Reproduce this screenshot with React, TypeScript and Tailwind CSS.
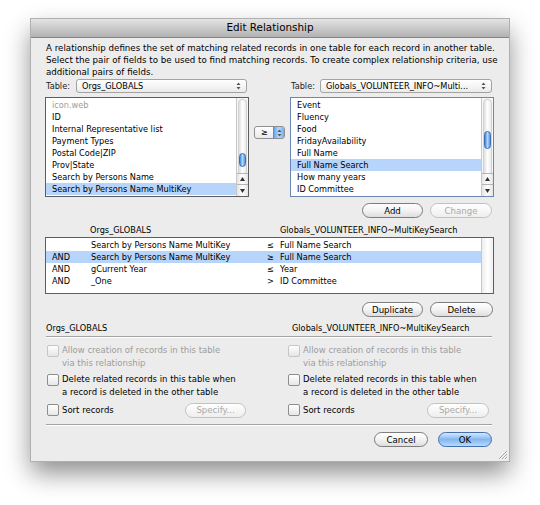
import React from "react";

const leftFields = [
  { name: "icon.web", dim: true },
  { name: "ID" },
  { name: "Internal Representative list" },
  { name: "Payment Types" },
  { name: "Postal Code|ZIP" },
  { name: "Prov|State" },
  { name: "Search by Persons Name" },
  { name: "Search by Persons Name MultiKey", selected: true },
];

const rightFields = [
  { name: "Event" },
  { name: "Fluency" },
  { name: "Food" },
  { name: "FridayAvailability" },
  { name: "Full Name" },
  { name: "Full Name Search", selected: true },
  { name: "How many years" },
  { name: "ID Committee" },
];

const criteria = [
  { join: "", left: "Search by Persons Name MultiKey", op: "≤", right: "Full Name Search" },
  { join: "AND", left: "Search by Persons Name MultiKey", op: "≥", right: "Full Name Search", selected: true },
  { join: "AND", left: "gCurrent Year", op: "≤", right: "Year" },
  { join: "AND", left: "_One", op: ">", right: "ID Committee" },
];

function UpDown() {
  return (
    <svg width="5" height="8" viewBox="0 0 5 8" className="shrink-0">
      <path d="M2.5 0.5 L4.5 3 L0.5 3 Z" fill="#555" />
      <path d="M0.5 5 L4.5 5 L2.5 7.5 Z" fill="#555" />
    </svg>
  );
}

function Popup({ label }: { label: string }) {
  return (
    <div className="flex h-[14px] flex-1 items-center rounded-[3px] border border-[#a3a3a3] bg-gradient-to-b from-white to-[#ebebeb] pl-[5px] pr-[5px]">
      <span className="flex-1 truncate leading-[12px]">{label}</span>
      <UpDown />
    </div>
  );
}

function Button({
  label,
  width,
  disabled,
  primary,
}: {
  label: string;
  width: string;
  disabled?: boolean;
  primary?: boolean;
}) {
  const look = primary
    ? "border-[#4470b0] bg-gradient-to-b from-[#d4e8fd] via-[#84b7f0] to-[#b6dafd] text-black"
    : disabled
      ? "border-[#c2c2c2] bg-gradient-to-b from-white to-[#eeeeee] text-[#a9a9a9]"
      : "border-[#7d7d7d] bg-gradient-to-b from-white via-[#f3f3f3] to-[#dedede] text-black";
  return (
    <div
      className={`flex h-[15px] items-center justify-center rounded-full border text-[8.6px] leading-[12px] ${width} ${look}`}
    >
      {label}
    </div>
  );
}

function Checkbox({ disabled }: { disabled?: boolean }) {
  return (
    <div
      className={`mt-[1px] h-[12px] w-[12px] shrink-0 rounded-[2px] border bg-gradient-to-b from-white to-[#e6e6e6] ${
        disabled ? "border-[#c6c6c6]" : "border-[#8d8d8d]"
      }`}
    />
  );
}

function ScrollBar({ thumb }: { thumb: string }) {
  return (
    <div className="flex w-[12px] shrink-0 flex-col border-l border-[#c9c9c9] bg-[#f6f6f6]">
      <div className="mx-[1px] mt-[1px] flex flex-1 flex-col rounded-t-full border border-b-0 border-[#d2d2d2] bg-gradient-to-r from-[#dedede] via-white to-[#eaeaea]">
        <div
          className={`rounded-full border border-[#3d6eb3] bg-gradient-to-r from-[#3f86dc] via-[#b3d6fc] to-[#5597e4] ${thumb}`}
        />
      </div>
      <div className="flex h-[11px] items-center justify-center border-t border-[#b5b5b5] bg-gradient-to-r from-[#e4e4e4] via-white to-[#e4e4e4]">
        <svg width="5" height="4" viewBox="0 0 5 4">
          <path d="M2.5 0 L5 4 L0 4 Z" fill="#333" />
        </svg>
      </div>
      <div className="flex h-[12px] items-center justify-center border-t border-[#b5b5b5] bg-gradient-to-r from-[#e4e4e4] via-white to-[#e4e4e4]">
        <svg width="5" height="4" viewBox="0 0 5 4">
          <path d="M0 0 L5 0 L2.5 4 Z" fill="#333" />
        </svg>
      </div>
    </div>
  );
}

function FieldList({
  items,
  thumb,
  focused,
}: {
  items: { name: string; dim?: boolean; selected?: boolean }[];
  thumb: string;
  focused?: boolean;
}) {
  return (
    <div
      className={`flex h-[100px] border bg-white ${focused ? "border-[#6b86b3]" : "border-[#5e5e5e]"}`}
    >
      <div className="flex-1 pt-[1px]">
        {items.map((it) => (
          <div
            key={it.name}
            className={`h-[12px] truncate pl-[6px] leading-[12px] ${it.selected ? "bg-[#b7d4fa]" : ""} ${
              it.dim ? "text-[#9c9c9c]" : ""
            }`}
          >
            {it.name}
          </div>
        ))}
      </div>
      <ScrollBar thumb={thumb} />
    </div>
  );
}

function Separator() {
  return <div className="mx-[1px] mr-[2px] h-[2px] border-t border-[#a2a2a2] border-b border-b-white" />;
}

export default function App() {
  return (
    <div className="min-h-[505px] bg-white pl-[31px] pt-[19px] font-['DejaVu_Sans',sans-serif] text-[8.2px] text-black">
      <div className="relative flex h-[442px] w-[478px] flex-col bg-[#ececec] shadow-[0_12px_24px_rgba(0,0,0,0.45)] ring-1 ring-[#b0b0b0]">
        {/* title bar */}
        <div className="flex h-[19px] shrink-0 items-center justify-center border-b border-[#858585] bg-gradient-to-b from-[#e4e4e4] to-[#b2b2b2] text-[10.4px]">
          Edit Relationship
        </div>

        <div className="flex flex-1 flex-col pl-[14px] pr-[15px] pt-[4px]">
          <p className="whitespace-nowrap pl-[1px] text-[8.7px] leading-[12px]">
            A relationship defines the set of matching related records in one table for each record in another table.
            <br />
            Select the pair of fields to be used to find matching records. To create complex relationship criteria, use
            <br />
            additional pairs of fields.
          </p>

          {/* table pickers + field lists */}
          <div className="mt-[1px] grid grid-cols-[204px_41px_204px]">
            <div className="flex items-center pr-[2px]">
              <span className="w-[31px] pl-[1px] text-[#222]">Table:</span>
              <Popup label="Orgs_GLOBALS" />
            </div>
            <div />
            <div className="flex items-center pr-[2px]">
              <span className="w-[30px] pl-[1px] text-[#222]">Table:</span>
              <Popup label="Globals_VOLUNTEER_INFO~Multi..." />
            </div>

            <div className="mt-[4px]">
              <FieldList items={leftFields} thumb="mt-[53px] h-[14px]" />
            </div>
            <div className="flex justify-center pt-[33px]">
              <div className="flex h-[13px] w-[31px] overflow-hidden rounded-[3px] border border-[#8f8f8f] bg-gradient-to-b from-white to-[#e9e9e9]">
                <span className="flex flex-1 items-center pl-[6px] text-[8px] leading-[11px]">≥</span>
                <div className="flex w-[11px] items-center justify-center border-l border-[#5b8ad0] bg-gradient-to-r from-[#6aa5ec] via-[#b9dafe] to-[#74acef]">
                  <UpDown />
                </div>
              </div>
            </div>
            <div className="mt-[4px]">
              <FieldList items={rightFields} thumb="mt-[31px] h-[18px]" focused />
            </div>
          </div>

          <div className="mt-[6px] flex justify-end gap-[7px] pr-[2px]">
            <Button label="Add" width="w-[61px]" />
            <Button label="Change" width="w-[62px]" disabled />
          </div>

          {/* criteria */}
          <div className="flex h-[19px] items-end pb-[1px] leading-[12px]">
            <span className="w-[235px] pl-[45px]">Orgs_GLOBALS</span>
            <span>Globals_VOLUNTEER_INFO~MultiKeySearch</span>
          </div>
          <div className="flex h-[57px] border border-[#5e5e5e] bg-white">
            <div className="flex-1 pt-[1px]">
              {criteria.map((c, i) => (
                <div key={i} className={`flex h-[12px] leading-[12px] ${c.selected ? "bg-[#b7d4fa]" : ""}`}>
                  <span className="w-[45px] pl-[6px]">{c.join}</span>
                  <span className="w-[176px]">{c.left}</span>
                  <span className="w-[13px]">{c.op}</span>
                  <span>{c.right}</span>
                </div>
              ))}
            </div>
            <div className="w-[12px] border-l border-[#c9c9c9] bg-gradient-to-r from-[#ededed] via-white to-[#efefef]" />
          </div>

          <div className="mt-[8px] flex justify-end gap-[7px] pr-[1px]">
            <Button label="Duplicate" width="w-[61px]" />
            <Button label="Delete" width="w-[63px]" />
          </div>

          {/* options */}
          <div className="mt-[5px] grid grid-cols-[243px_206px] leading-[12px]">
            <span className="pl-[1px]">Orgs_GLOBALS</span>
            <span className="pl-[4px]">Globals_VOLUNTEER_INFO~MultiKeySearch</span>
          </div>
          <div className="mt-[2px]">
            <Separator />
          </div>

          <div className="mt-[6px] grid grid-cols-[243px_206px] text-[8.5px]">
            {[
              { pad: "pl-[2px]", label: "w-[126px]" },
              { pad: "pl-0", label: "w-[127px]" },
            ].map((col, i) => (
              <div key={i} className={`flex flex-col ${col.pad}`}>
                <div className="flex gap-[3px] leading-[13px]">
                  <Checkbox disabled />
                  <span className="text-[#9d9d9d]">
                    Allow creation of records in this table
                    <br />
                    via this relationship
                  </span>
                </div>
                <div className="mt-[3px] flex gap-[3px] leading-[13px]">
                  <Checkbox />
                  <span>
                    Delete related records in this table when
                    <br />a record is deleted in the other table
                  </span>
                </div>
                <div className="mt-[3px] flex h-[16px] items-center">
                  <div className="-mt-[1px] flex items-center">
                    <Checkbox />
                  </div>
                  <span className={`pl-[3px] ${col.label}`}>Sort records</span>
                  <Button label="Specify..." width={i === 0 ? "w-[61px]" : "w-[62px]"} disabled />
                </div>
              </div>
            ))}
          </div>

          <div className="mt-[6px]">
            <Separator />
          </div>

          <div className="mt-[6px] flex justify-end gap-[10px] pr-[2px]">
            <Button label="Cancel" width="w-[54px]" />
            <Button label="OK" width="w-[54px]" primary />
          </div>
        </div>

        {/* resize grip */}
        <svg width="11" height="11" viewBox="0 0 11 11" className="absolute bottom-[1px] right-[1px]">
          <path d="M10 2 L2 10 M10 5 L5 10 M10 8 L8 10" stroke="#8e8e8e" strokeWidth="0.8" />
          <path d="M10 3 L3 10 M10 6 L6 10 M10 9 L9 10" stroke="#fff" strokeWidth="0.8" />
        </svg>
      </div>
    </div>
  );
}
